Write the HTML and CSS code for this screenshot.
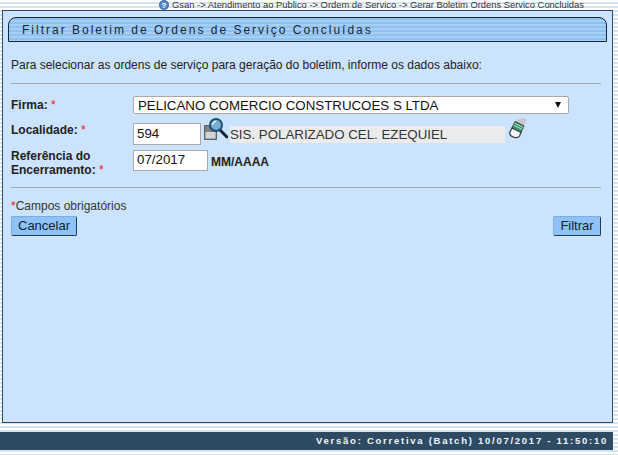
FILE: index.html
```html
<!DOCTYPE html>
<html lang="pt">
<head>
<meta charset="utf-8">
<title>Filtrar Boletim</title>
<link rel="stylesheet" href="styles.css">
</head>
<body>
<div class="crumbs">
  <svg class="help" width="10" height="10" viewBox="0 0 10 10"><circle cx="5" cy="5" r="5" fill="#3f6fb0"/><circle cx="5" cy="5" r="3.6" fill="#5f8fd0"/><text x="5" y="8" text-anchor="middle" class="help-q">?</text></svg>
  <span>Gsan -&gt; Atendimento ao Publico -&gt; Ordem de Servico -&gt; Gerar Boletim Ordens Servico Concluidas</span>
</div>
<main class="panel">
  <h1 class="title">Filtrar Boletim de Ordens de Serviço Concluídas</h1>
  <p class="intro">Para selecionar as ordens de serviço para geração do boletim, informe os dados abaixo:</p>
  <hr class="rule rule-top">
  <div class="row row-firma">
    <label class="lbl">Firma: <i>*</i></label>
    <div class="select"><span>PELICANO COMERCIO CONSTRUCOES S LTDA</span><b class="arrow"></b></div>
  </div>
  <div class="row row-local">
    <label class="lbl">Localidade: <i>*</i></label>
    <div class="input in-local">594</div>
    <svg class="ico-search" width="24" height="22" viewBox="0 0 24 22">
      <path d="M0.500 7.500h8l4 3.500v10.500h-12z" fill="#7f8284" stroke="#5d6064"/>
      <path d="M1.500 14h10v6.500h-10z" fill="#d2d3d4"/>
      <path d="M16 12l7 7" stroke="#1b2230" stroke-width="3" stroke-linecap="round"/>
      <circle cx="12" cy="7" r="6" fill="#78aed2" stroke="#1f4f70" stroke-width="2"/>
      <path d="M8.500 7a3.500 3.500 0 0 1 3.500-3.500" stroke="#e4f3fb" stroke-width="1.500" fill="none"/>
    </svg>
    <div class="readonly">SIS. POLARIZADO CEL. EZEQUIEL</div>
    <svg class="ico-eraser" width="18" height="21" viewBox="0 0 18 21">
      <path d="M7 2l8-2 3 2-3 6-8-3z" fill="#c6c8c9"/>
      <path d="M6 3.500l9 4.500-3 6.500-9-4.500z" fill="#3c9a72" stroke="#2d3a36"/>
      <path d="M4.500 7l9 4.500M5.500 5l9 4.500" stroke="#a8dcc0"/>
      <path d="M3 10l9 4.500-1.500 3.500c-1 1.500-3 2-5 1.500-3-.8-5-2.500-4.800-5z" fill="#f4f6f5" stroke="#3a3f3d" stroke-width="1.200"/>
    </svg>
  </div>
  <div class="row row-ref">
    <label class="lbl lbl-two">Referência do Encerramento: <i>*</i></label>
    <div class="input in-ref">07/2017</div>
    <strong class="fmt">MM/AAAA</strong>
  </div>
  <hr class="rule rule-bottom">
  <p class="req"><i>*</i>Campos obrigatórios</p>
  <div class="actions">
    <button class="btn" type="button">Cancelar</button>
    <button class="btn btn-filter" type="button">Filtrar</button>
  </div>
</main>
<footer class="footer">Versão: Corretiva (Batch) 10/07/2017 - 11:50:10</footer>
</body>
</html>
```
FILE: styles.css
```css
* { box-sizing: border-box; }
html, body { margin: 0; padding: 0; height: 100%; overflow: hidden; }
body {
  font-family: "Liberation Sans", Arial, sans-serif;
  font-size: 12px;
  color: #222;
  background: repeating-linear-gradient(180deg, #ffffff 0, #ffffff 2px, #d3e5ee 2px, #d3e5ee 4px);
}
.crumbs {
  height: 10px;
  padding-right: 34px;
  display: flex;
  justify-content: flex-end;
  align-items: center;
  gap: 3px;
  font-size: 9.390px;
  line-height: 10px;
  color: #334;
  white-space: nowrap;
  margin-left: 0;
  width: 618px;
}
.help { flex: none; }
.help-q { font: bold 8px "Liberation Sans", sans-serif; fill: #fff; }
.panel {
  width: 611px;
  height: 413px;
  margin-left: 2px;
  padding: 6px 5px 0;
  background: #cbe3fd;
  border: 1px solid #2f4a66;
  border-right-color: #33506c;
}
.title {
  margin: 0;
  height: 25px;
  width: 599px;
  padding: 0 0 0 13px;
  font-size: 12px;
  font-weight: normal;
  line-height: 24px;
  letter-spacing: 2px;
  color: #17263a;
  border: 1px solid #12263c;
  border-radius: 8px 8px 0 0;
  background: repeating-linear-gradient(180deg, #8fc0ef 0, #8fc0ef 2px, #a6cff5 2px, #a6cff5 4px);
  white-space: nowrap;
}
.intro { margin: 16px 0 0 3px; line-height: 14px; font-size: 12px; }
.rule { border: 0; height: 1px; background: #a3a8ad; margin: 0 0 0 3px; width: 590px; }
.rule-top { margin-top: 11px; }
.rule-bottom { margin-top: 5px; }
.row { display: flex; align-items: flex-start; margin-left: 3px; position: relative; }
.lbl { width: 122px; flex: none; font-weight: bold; font-size: 12px; line-height: 14px; color: #222; }
.lbl i, .req i { color: #e11; font-style: normal; font-weight: normal; }
.row-firma { margin-top: 12px; height: 20px; }
.row-firma .lbl { padding-top: 2px; }
.select {
  width: 436px;
  height: 18px;
  background: #fff;
  border: 1px solid #a9a9a9;
  border-radius: 2px;
  display: flex;
  justify-content: space-between;
  align-items: center;
  padding: 0 7px 0 4px;
  font-size: 13.300px;
  color: #111;
  white-space: nowrap;
}
.arrow { width: 0; height: 0; border-left: 3.500px solid transparent; border-right: 3.500px solid transparent; border-top: 6px solid #111; }
.input {
  background: #fff;
  border: 1px solid #a9a9a9;
  font-size: 13.300px;
  color: #111;
  padding: 0 3px;
  line-height: 18px;
  height: 21px;
}
.row-local { margin-top: 5px; height: 29px; }
.row-local .lbl { padding-top: 2px; }
.in-local { width: 68px; height: 22px; margin-top: 2px; line-height: 20px; }
.ico-search { margin: -3px 0 0 3px; flex: none; }
.readonly {
  width: 275px;
  height: 17px;
  margin: 5px 0 0 2px;
  background: #ebebeb;
  font-size: 13.300px;
  line-height: 17px;
  color: #333;
  white-space: nowrap;
}
.ico-eraser { margin: -3px 0 0 4px; flex: none; }
.row-ref { margin-top: 0; height: 32px; }
.row-ref .lbl { width: 122px; padding-right: 20px; line-height: 14px; margin-top: -1px; }
.in-ref { width: 75px; margin-top: 0; }
.fmt { margin: 5px 0 0 3px; font-size: 12px; line-height: 14px; color: #222; }
.req { margin: 11px 0 0 3px; line-height: 14px; font-size: 12px; color: #333; }
.actions { display: flex; justify-content: space-between; margin: 3px 0 0 3px; width: 590px; }
.btn {
  height: 20px;
  padding: 0 6px;
  font: 13px/18px "Liberation Sans", Arial, sans-serif;
  color: #123;
  background: #8fc3f8;
  border: 1px solid #7aaee0;
  border-right-color: #1d3a5c;
  border-bottom-color: #1d3a5c;
  border-radius: 2px;
}
.btn-filter { width: 48px; padding: 0; }
.footer {
  margin-top: 9px;
  width: 613px;
  height: 18px;
  padding-right: 5px;
  background: #2f4a63;
  color: #f2f5f8;
  font-size: 9.500px;
  font-weight: bold;
  line-height: 18px;
  letter-spacing: 1.740px;
  text-align: right;
  white-space: nowrap;
}
```
